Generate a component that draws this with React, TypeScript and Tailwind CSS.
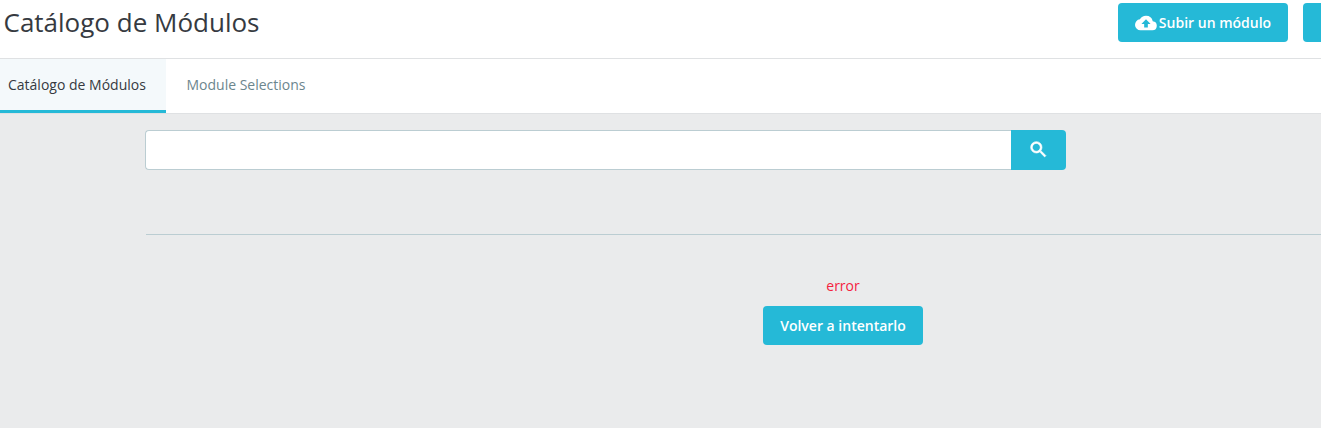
function CloudUpload() {
  return (
    <svg viewBox="0 0 24 24" className="h-[22px] w-[22px] shrink-0" fill="currentColor">
      <path d="M19.35 10.04A7.49 7.49 0 0 0 12 4a7.5 7.5 0 0 0-6.65 4.04A6 6 0 0 0 6 20h13a5 5 0 0 0 .35-9.96zM14 13v4h-4v-4H7l5-5 5 5h-3z" />
    </svg>
  );
}

function SearchIcon() {
  return (
    <svg viewBox="0 0 24 24" className="mb-[1px] h-[21px] w-[21px]" fill="currentColor" stroke="currentColor" strokeWidth={0.7}>
      <path d="M15.5 14h-.79l-.28-.27A6.471 6.471 0 0 0 16 9.5 6.5 6.5 0 1 0 9.5 16c1.61 0 3.09-.59 4.23-1.57l.27.28v.79l5 4.99L20.49 19l-4.99-5zm-6 0C7.01 14 5 11.99 5 9.5S7.01 5 9.5 5 14 7.01 14 9.5 11.99 14 9.5 14z" />
    </svg>
  );
}

export default function App() {
  return (
    <div className="h-[428px] w-[1321px] overflow-hidden bg-[#eaebec] font-['Open_Sans',sans-serif]">
      <header className="flex h-[59px] border-b border-[#dfe1e3] bg-white">
        <h1 className="w-[1118px] shrink-0 pl-[3.5px] pt-[4px] text-[26px] leading-[36px] font-normal text-[#363a41]">
          Catálogo de Módulos
        </h1>
        <div className="flex shrink-0 gap-[15px] pt-[3px]">
          <button
            type="button"
            className="flex h-[39px] w-[170px] items-center justify-center gap-[2px] rounded-[4px] bg-[#25b9d7] text-[14px] font-semibold text-white"
          >
            <CloudUpload />
            Subir un módulo
          </button>
          <button type="button" className="h-[39px] w-[170px] rounded-[4px] bg-[#25b9d7]" />
        </div>
      </header>

      <nav className="flex h-[55px] border-b border-[#dfe1e3] bg-white text-[14px]">
        <div className="flex w-[166px] items-center border-b-[3px] border-[#25b9d7] bg-[#f4f9fb] pb-[1px] pl-[8px] text-[#363a41]">
          Catálogo de Módulos
        </div>
        <div className="flex w-[160px] items-center justify-center pb-[3px] text-[#6c868e]">
          Module Selections
        </div>
      </nav>

      <main className="w-[1540px] pl-[146px] pt-[16px]">
        <div className="-ml-[1px] flex h-10 w-[921px]">
          <div className="flex-1 rounded-l-[4px] border border-r-0 border-[#bbcdd2] bg-white" />
          <button
            type="button"
            className="flex w-[55px] items-center justify-center rounded-r-[4px] bg-[#25b9d7] text-white"
          >
            <SearchIcon />
          </button>
        </div>

        <hr className="mt-[64px] border-t border-[#bbcdd2]" />

        <div className="flex flex-col items-center pt-[41px]">
          <p className="text-[14px] leading-[19px] text-[#f5223f]">error</p>
          <button
            type="button"
            className="mt-[11px] h-[39px] w-[160px] rounded-[4px] bg-[#25b9d7] text-[14px] font-semibold text-white"
          >
            Volver a intentarlo
          </button>
        </div>
      </main>
    </div>
  );
}
